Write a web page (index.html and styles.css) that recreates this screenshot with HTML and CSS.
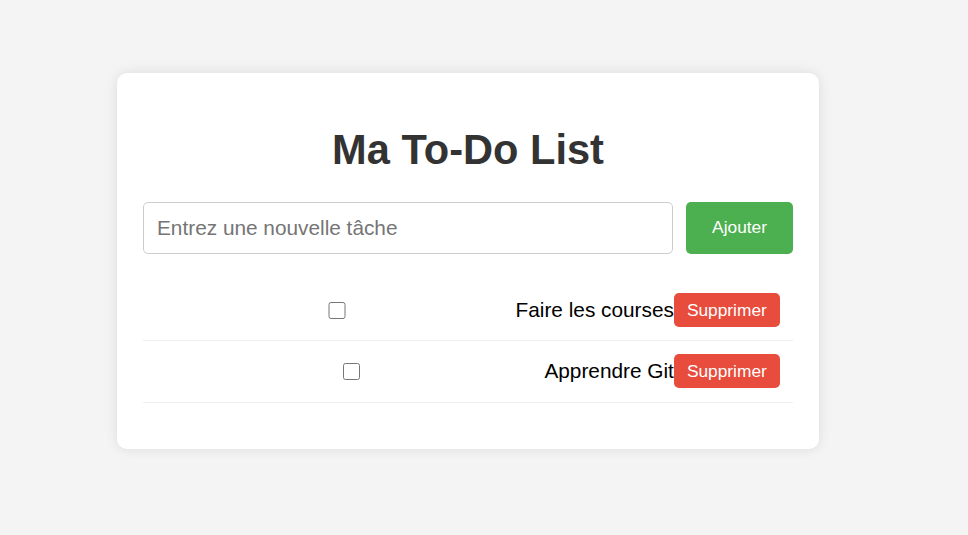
FILE: index.html
```html
<!DOCTYPE html>
<html lang="fr">
<head>
<meta charset="utf-8">
<title>Ma To-Do List</title>
<link rel="stylesheet" href="styles.css">
</head>
<body>
  <div class="card">
    <h1 class="title">Ma To-Do List</h1>
    <div class="add-row">
      <input class="task-input" type="text" placeholder="Entrez une nouvelle tâche">
      <button class="add-btn">Ajouter</button>
    </div>
    <ul class="task-list">
      <li class="task">
        <input class="task-check" type="checkbox">
        <span class="task-text">Faire les courses</span>
        <button class="del-btn">Supprimer</button>
      </li>
      <li class="task">
        <input class="task-check" type="checkbox">
        <span class="task-text">Apprendre Git</span>
        <button class="del-btn">Supprimer</button>
      </li>
    </ul>
  </div>
</body>
</html>
```

FILE: styles.css
```css
* {
  box-sizing: border-box;
}

body {
  margin: 0;
  padding: 73px 0 0 0;
  background: #f4f4f4;
  font-family: "Liberation Sans", Arial, sans-serif;
  min-height: 535px;
}

.card {
  width: 702px;
  margin: 0 0 0 117px;
  padding: 26px;
  background: #fff;
  border-radius: 10px;
  box-shadow: 0 0 13px rgba(0, 0, 0, 0.1);
}

.title {
  margin: 27px 0 27.6px;
  font-size: 41.6px;
  font-weight: bold;
  color: #333;
  text-align: center;
  line-height: normal;
}

.add-row {
  display: flex;
  gap: 13px;
}

.task-input {
  flex: 1;
  margin: 0;
  padding: 13px;
  font-family: "Liberation Sans", Arial, sans-serif;
  font-size: 20.8px;
  border: 1px solid #ccc;
  border-radius: 5px;
  color: #000;
}

.task-input::placeholder {
  color: #757575;
}

.add-btn {
  margin: 0;
  padding: 13px 26px;
  font-family: "Liberation Sans", Arial, sans-serif;
  font-size: 17.33px;
  background: #4caf50;
  color: #fff;
  border: none;
  border-radius: 5px;
}

.task-list {
  list-style: none;
  margin: 26.3px 0 20.2px;
  padding: 0;
}

.task {
  display: flex;
  align-items: center;
  padding: 13.2px;
  border-bottom: 1px solid #eee;
  font-size: 20.8px;
  color: #000;
}

.task-check {
  flex: 1;
  height: 16.9px;
  margin: 3.9px 3.9px 3.9px 5.5px;
}

.task-text {
  white-space: nowrap;
}

.del-btn {
  margin: 0;
  padding: 6.5px 13px;
  font-family: "Liberation Sans", Arial, sans-serif;
  font-size: 17.33px;
  background: #e74c3c;
  color: #fff;
  border: none;
  border-radius: 5px;
}
```
